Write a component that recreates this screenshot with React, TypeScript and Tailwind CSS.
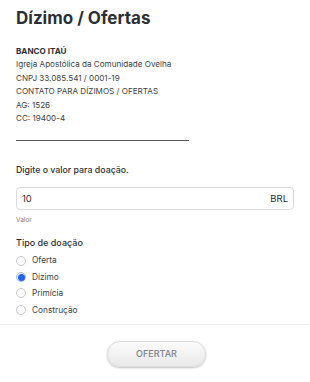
import React, { useState } from 'react';

const tipos = ['Oferta', 'Dízimo', 'Primícia', 'Construção'];

const App: React.FC = () => {
  const [valor, setValor] = useState('10');
  const [tipo, setTipo] = useState('Dízimo');

  return (
    <div className="w-[310px] h-[382px] bg-white text-[#2f3237] overflow-hidden" style={{ fontFamily: 'Inter, "Noto Sans", sans-serif' }}>
      <div className="px-4 pt-[3px]">
        <h1 className="text-[17px] leading-[30px] font-bold text-[#2b2f36]">Dízimo / Ofertas</h1>

        <div className="mt-[12px] text-[8.1px] leading-[13.4px] text-[#3b3f46]">
          <p className="font-bold text-[#2b2f36]">BANCO ITAÚ</p>
          <p>Igreja Apostólica da Comunidade Ovelha</p>
          <p>CNPJ 33.085.541 / 0001-19</p>
          <p>CONTATO PARA DÍZIMOS / OFERTAS</p>
          <p>AG: 1526</p>
          <p>CC: 19400-4</p>
        </div>

        <div className="mt-[15px] w-[173px] border-t border-[#55585e]" />

        <label className="block mt-[22px] text-[8.8px] leading-[14px] font-medium text-[#2b2f36]">
          Digite o valor para doação.
        </label>

        <div className="mt-[10px] flex items-center h-[23px] border border-[#d9dbe0] rounded-[4px] px-[5px]">
          <input
            value={valor}
            onChange={(e) => setValor(e.target.value)}
            className="flex-1 min-w-0 bg-transparent outline-none text-[9.5px] text-[#2b2f36]"
          />
          <span className="text-[9.5px] text-[#2b2f36]">BRL</span>
        </div>
        <p className="mt-[5px] text-[6.5px] leading-[10px] text-[#7a7e85]">Valor</p>

        <p className="mt-[11px] text-[9px] leading-[14px] font-medium text-[#2b2f36]">Tipo de doação</p>

        <div className="mt-[2px] flex flex-col">
          {tipos.map((t) => {
            const checked = tipo === t;
            return (
              <label key={t} className="flex items-center gap-[6px] h-[16.4px] cursor-pointer" onClick={() => setTipo(t)}>
                <span
                  className={`w-[10px] h-[10px] rounded-full flex items-center justify-center border ${
                    checked ? 'border-[#9cb8f7]' : 'border-[#c5c8ce]'
                  }`}
                >
                  {checked && <span className="w-[7px] h-[7px] rounded-full bg-[#2563eb]" />}
                </span>
                <span className="text-[8.3px] text-[#3b3f46]">{t}</span>
              </label>
            );
          })}
        </div>
      </div>

      <div className="mt-[6px] border-t border-[#eef0f4]" />

      <div className="flex justify-center pt-[16px]">
        <button className="ml-[3px] w-[99px] h-[26px] rounded-full bg-gradient-to-b from-[#fbfbfb] to-[#e9e9ea] border border-[#dcdcdc] shadow-[0_1px_2px_rgba(0,0,0,0.25)] text-[9px] font-medium text-[#7e8289]">
          OFERTAR
        </button>
      </div>
    </div>
  );
};

export default App;
